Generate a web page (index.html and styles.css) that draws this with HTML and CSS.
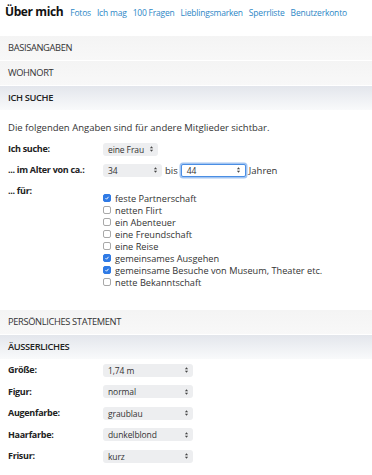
FILE: index.html
```html
<!DOCTYPE html>
<html lang="de">

<head>
  <meta charset="UTF-8">
  <meta name="viewport" content="width=device-width, initial-scale=1.0">
  <title>Über mich</title>
  <link rel="stylesheet" href="styles.css">
</head>

<body>
  <header class="head">
    <h1>Über mich</h1>
    <nav class="tabs">
      <a>Fotos</a>
      <a>Ich mag</a>
      <a>100 Fragen</a>
      <a>Lieblingsmarken</a>
      <a>Sperrliste</a>
      <a>Benutzerkonto</a>
    </nav>
  </header>

  <div class="bar">BASISANGABEN</div>
  <div class="bar">WOHNORT</div>
  <div class="bar active">ICH SUCHE</div>

  <section class="panel search">
    <p class="note">Die folgenden Angaben sind für andere Mitglieder sichtbar.</p>

    <div class="row">
      <span class="label">Ich suche:</span>
      <div class="select w-frau"><span>eine Frau</span><svg class="arrow" viewBox="0 0 6 10"><path d="M1 4 L3 1.5 L5 4 Z M1 6 L3 8.5 L5 6 Z"/></svg></div>
    </div>

    <div class="row">
      <span class="label">... im Alter von ca.:</span>
      <div class="select w-age"><span>34</span><svg class="arrow" viewBox="0 0 6 10"><path d="M1 4 L3 1.5 L5 4 Z M1 6 L3 8.5 L5 6 Z"/></svg></div>
      <span class="word">bis</span>
      <div class="select w-age2 focus"><span>44</span><svg class="arrow" viewBox="0 0 6 10"><path d="M1 4 L3 1.5 L5 4 Z M1 6 L3 8.5 L5 6 Z"/></svg></div>
      <span class="word">Jahren</span>
    </div>

    <div class="row top">
      <span class="label">... für:</span>
      <ul class="checks">
        <li><span class="box on"><svg viewBox="0 0 10 10"><path d="M2.5 5.2 L4.3 7 L7.6 3"/></svg></span>feste Partnerschaft</li>
        <li><span class="box"></span>netten Flirt</li>
        <li><span class="box"></span>ein Abenteuer</li>
        <li><span class="box"></span>eine Freundschaft</li>
        <li><span class="box"></span>eine Reise</li>
        <li><span class="box on"><svg viewBox="0 0 10 10"><path d="M2.5 5.2 L4.3 7 L7.6 3"/></svg></span>gemeinsames Ausgehen</li>
        <li><span class="box on"><svg viewBox="0 0 10 10"><path d="M2.5 5.2 L4.3 7 L7.6 3"/></svg></span>gemeinsame Besuche von Museum, Theater etc.</li>
        <li><span class="box"></span>nette Bekanntschaft</li>
      </ul>
    </div>
  </section>

  <div class="bar">PERSÖNLICHES STATEMENT</div>
  <div class="bar active">ÄUSSERLICHES</div>

  <section class="panel looks">
    <div class="row">
      <span class="label">Größe:</span>
      <div class="select w-wide"><span>1,74 m</span><svg class="arrow" viewBox="0 0 6 10"><path d="M1 4 L3 1.5 L5 4 Z M1 6 L3 8.5 L5 6 Z"/></svg></div>
    </div>
    <div class="row">
      <span class="label">Figur:</span>
      <div class="select w-wide"><span>normal</span><svg class="arrow" viewBox="0 0 6 10"><path d="M1 4 L3 1.5 L5 4 Z M1 6 L3 8.5 L5 6 Z"/></svg></div>
    </div>
    <div class="row">
      <span class="label">Augenfarbe:</span>
      <div class="select w-wide"><span>graublau</span><svg class="arrow" viewBox="0 0 6 10"><path d="M1 4 L3 1.5 L5 4 Z M1 6 L3 8.5 L5 6 Z"/></svg></div>
    </div>
    <div class="row">
      <span class="label">Haarfarbe:</span>
      <div class="select w-wide"><span>dunkelblond</span><svg class="arrow" viewBox="0 0 6 10"><path d="M1 4 L3 1.5 L5 4 Z M1 6 L3 8.5 L5 6 Z"/></svg></div>
    </div>
    <div class="row">
      <span class="label">Frisur:</span>
      <div class="select w-wide"><span>kurz</span><svg class="arrow" viewBox="0 0 6 10"><path d="M1 4 L3 1.5 L5 4 Z M1 6 L3 8.5 L5 6 Z"/></svg></div>
    </div>
  </section>
</body>

</html>
```

FILE: styles.css
```css
body {
  margin: 0;
  background: #fff;
  color: #333;
  font-family: "Open Sans", "Liberation Sans", sans-serif;
  font-size: 9.5px;
}

/* Kopfzeile */
.head {
  display: flex;
  align-items: baseline;
  height: 36px;
  padding: 3px 5px 0;
  box-sizing: border-box;
}

.head h1 {
  margin: 0;
  font-size: 12px;
  line-height: 17px;
  font-weight: 700;
  color: #111;
  letter-spacing: -0.4px;
}

.tabs {
  display: flex;
  gap: 6px;
  margin-left: 7px;
}

.tabs a {
  color: #2d87c6;
  font-size: 8.5px;
  letter-spacing: -0.2px;
  cursor: pointer;
}

/* Abschnittsbalken */
.bar {
  height: 24px;
  line-height: 24px;
  margin-bottom: 1px;
  padding-left: 8px;
  background: linear-gradient(#f4f4f4, #f8f8f8);
  font-size: 9.3px;
  letter-spacing: -0.35px;
  color: #333;
}

.bar.active {
  background: linear-gradient(#e3e6ec, #f9fafb);
  font-weight: 600;
  color: #222;
}

.panel {
  padding: 11px 8px 17px;
}

.panel.looks {
  padding-top: 2px;
}

.note {
  margin: 0 0 7px;
  line-height: 12px;
}

.row {
  display: flex;
  align-items: center;
  min-height: 16px;
  margin-bottom: 5px;
}

.looks .row {
  margin-bottom: 5.5px;
}

.row.top {
  align-items: flex-start;
}

.label {
  width: 95px;
  flex: none;
  font-size: 9px;
  font-weight: 700;
  color: #222;
  line-height: 16px;
  letter-spacing: -0.3px;
}

.word {
  margin: 0 3px;
}

/* Auswahlfelder */
.select {
  display: flex;
  justify-content: space-between;
  align-items: center;
  height: 13px;
  padding: 0 4px 0 5px;
  box-sizing: border-box;
  background: #edeef0;
  border-radius: 3px;
  font-size: 8.5px;
  letter-spacing: -0.1px;
  color: #333;
}

.select .arrow {
  width: 5px;
  height: 8px;
  flex: none;
  fill: #444;
}

.select.focus {
  background: #fff;
  border: 1px solid #4a8ee4;
  box-shadow: 0 0 0 1.5px rgba(88, 150, 232, 0.55);
  border-radius: 2px;
}

.w-frau { width: 55px; }
.w-age { width: 59px; }
.w-age2 { width: 65px; }
.w-wide { width: 90px; }

/* Checkboxen */
.checks {
  list-style: none;
  margin: 0;
  padding: 9px 0 0;
  font-size: 9.2px;
}

.checks li {
  display: flex;
  align-items: center;
  height: 12px;
  color: #333;
}

.box {
  width: 8px;
  height: 8px;
  margin-right: 4px;
  border: 1px solid #a8a8a8;
  border-radius: 2px;
  background: #fff;
  box-sizing: border-box;
  display: flex;
}

.box.on {
  background: #2f7ae5;
  border-color: #2f7ae5;
}

.box svg {
  width: 100%;
  height: 100%;
  fill: none;
  stroke: #fff;
  stroke-width: 1.6;
}
```
